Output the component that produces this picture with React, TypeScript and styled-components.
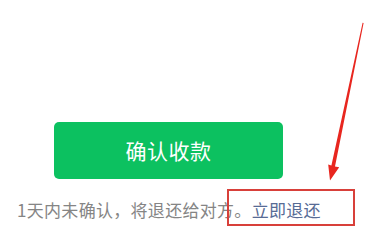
import React from "react";
import styled, { createGlobalStyle } from "styled-components";

const Global = createGlobalStyle`
  html, body { margin: 0; padding: 0; background: #ffffff; }
  body { font-family: "Noto Sans CJK SC", "Noto Sans", sans-serif; }
`;

const Page = styled.div`
  position: relative;
  width: 375px;
  height: 251px;
  overflow: hidden;
  background: #ffffff;
  display: flex;
  flex-direction: column;
  padding-top: 122px;
  box-sizing: border-box;
`;

const ConfirmButton = styled.button`
  margin-left: 54px;
  width: 229px;
  height: 57px;
  border: none;
  border-radius: 5px;
  background: #0cc160;
  color: #ffffff;
  font-family: "Noto Sans CJK SC", sans-serif;
  font-size: 21px;
  font-weight: 400;
  letter-spacing: 0.5px;
  display: flex;
  align-items: center;
  justify-content: center;
  padding: 0 0 2px 0;
`;

const Notice = styled.p`
  margin: 19px 0 0 17px;
  font-size: 17px;
  line-height: 24px;
  color: #858585;
  white-space: nowrap;
  letter-spacing: 0.3px;
`;

const Link = styled.span`
  color: #576b95;
`;

const Highlight = styled.div`
  position: absolute;
  left: 227px;
  top: 189px;
  width: 128px;
  height: 37px;
  border: 2px solid #d8403a;
  box-sizing: border-box;
`;

const Overlay = styled.svg`
  position: absolute;
  left: 0;
  top: 0;
  pointer-events: none;
`;

export default function App() {
  return (
    <>
      <Global />
      <Page>
        <ConfirmButton>确认收款</ConfirmButton>
        <Notice>
          1天内未确认，将退还给对方。<Link>立即退还</Link>
        </Notice>
        <Highlight />
        <Overlay width="375" height="251" viewBox="0 0 375 251">
          <polygon
            points="363.6,23 362.6,22.8 331.4,165.4 328.2,164.6 330,180.5 339.2,167.2 335,166.4"
            fill="#e8261f"
          />
        </Overlay>
      </Page>
    </>
  );
}
